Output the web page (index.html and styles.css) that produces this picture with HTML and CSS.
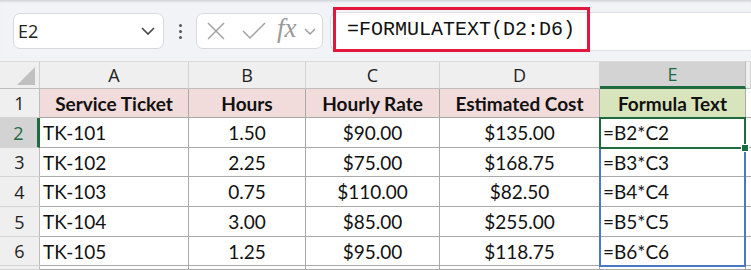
FILE: index.html
```html
<!DOCTYPE html>
<html lang="en">
<head>
  <meta charset="UTF-8" />
  <title>Formula Text</title>
  <link rel="stylesheet" href="styles.css">
</head>
<body>
  <div class="toolbar">
    <div class="namebox">
      <span>E2</span>
      <svg class="chev" width="14" height="8" viewBox="0 0 14 8"><path d="M1 1 L7 7 L13 1" fill="none" stroke="#444" stroke-width="1.6"/></svg>
    </div>
    <div class="grip"><span></span><span></span><span></span></div>
    <div class="fnbox">
      <svg class="ico x" width="20" height="20" viewBox="0 0 20 20"><path d="M2 2 L18 18 M18 2 L2 18" stroke="#a3a3a3" stroke-width="1.5"/></svg>
      <svg class="ico" width="26" height="20" viewBox="0 0 26 20"><path d="M2 10 L9 17 L24 2" fill="none" stroke="#a3a3a3" stroke-width="1.5"/></svg>
      <span class="fx">fx</span>
      <svg class="chev small" width="12" height="7" viewBox="0 0 12 7"><path d="M1 1 L6 6 L11 1" fill="none" stroke="#9a9a9a" stroke-width="1.4"/></svg>
    </div>
    <div class="formula">
      <div class="formula-text">=FORMULATEXT(D2:D6)</div>
    </div>
  </div>

  <div class="sheet">
    <div class="corner"><span class="tri"></span></div>
    <div class="hd">A</div>
    <div class="hd">B</div>
    <div class="hd">C</div>
    <div class="hd">D</div>
    <div class="hd active">E</div>
    <div class="hd"></div>

    <div class="rh">1</div>
    <div class="c th">Service Ticket</div>
    <div class="c th">Hours</div>
    <div class="c th">Hourly Rate</div>
    <div class="c th">Estimated Cost</div>
    <div class="c th green">Formula Text</div>
    <div class="c blank"></div>

    <div class="rh active">2</div>
    <div class="c">TK-101</div>
    <div class="c mid">1.50</div>
    <div class="c mid">$90.00</div>
    <div class="c mid">$135.00</div>
    <div class="c">=B2*C2</div>
    <div class="c blank"></div>

    <div class="rh">3</div>
    <div class="c">TK-102</div>
    <div class="c mid">2.25</div>
    <div class="c mid">$75.00</div>
    <div class="c mid">$168.75</div>
    <div class="c">=B3*C3</div>
    <div class="c blank"></div>

    <div class="rh">4</div>
    <div class="c">TK-103</div>
    <div class="c mid">0.75</div>
    <div class="c mid">$110.00</div>
    <div class="c mid">$82.50</div>
    <div class="c">=B4*C4</div>
    <div class="c blank"></div>

    <div class="rh">5</div>
    <div class="c">TK-104</div>
    <div class="c mid">3.00</div>
    <div class="c mid">$85.00</div>
    <div class="c mid">$255.00</div>
    <div class="c">=B5*C5</div>
    <div class="c blank"></div>

    <div class="rh">6</div>
    <div class="c">TK-105</div>
    <div class="c mid">1.25</div>
    <div class="c mid">$95.00</div>
    <div class="c mid">$118.75</div>
    <div class="c">=B6*C6</div>
    <div class="c blank"></div>

    <div class="rh"></div>
    <div class="c"></div>
    <div class="c"></div>
    <div class="c"></div>
    <div class="c"></div>
    <div class="c"></div>
    <div class="c blank"></div>

    <div class="range"></div>
    <div class="selected"><span class="handle"></span></div>
  </div>
</body>
</html>
```

FILE: styles.css
```css
body {
  margin: 0;
  width: 751px;
  height: 270px;
  overflow: hidden;
  background: #f1f3f6;
  font-family: 'Lato', 'Open Sans', sans-serif;
  color: #111;
}

.toolbar {
  height: 61px;
  display: flex;
  align-items: flex-start;
  padding: 13px 0 0 13px;
  box-sizing: border-box;
  box-shadow: inset 0 3px 3px -2px rgba(0,0,0,0.18);
}

.namebox {
  width: 151px;
  height: 36px;
  box-sizing: border-box;
  background: #fff;
  border: 1px solid #d6d9de;
  border-radius: 7px;
  display: flex;
  align-items: center;
  justify-content: space-between;
  padding: 0 8px 0 4px;
  font-family: 'Open Sans', sans-serif;
  font-size: 18px;
  color: #222;
}

.grip {
  width: 32px;
  height: 36px;
  display: flex;
  flex-direction: column;
  align-items: center;
  justify-content: center;
  gap: 3px;
}

.grip span {
  width: 3px;
  height: 3px;
  border-radius: 50%;
  background: #555;
}

.fnbox {
  width: 127px;
  height: 36px;
  box-sizing: border-box;
  background: #fff;
  border: 1px solid #d6d9de;
  border-radius: 7px;
  display: flex;
  align-items: center;
  padding: 0 0 0 9px;
}

.fnbox .ico { margin-right: 10px; }
.fnbox .ico.x { margin-right: 15px; }

.fx {
  font-family: 'Liberation Serif', serif;
  font-style: italic;
  font-size: 27px;
  color: #9a9a9a;
  margin: -5px 7px 0 0;
}

.formula {
  position: relative;
  flex: 1;
  height: 37px;
  margin: -1px 0 0 7px;
  background: #fff;
  border: 1px solid #dde0e4;
  border-right: none;
  border-radius: 7px 0 0 7px;
}

.formula-text {
  position: absolute;
  left: 2px;
  top: -6px;
  width: 257px;
  height: 45px;
  box-sizing: border-box;
  border: 3px solid #e3173e;
  padding: 0 0 0 11px;
  line-height: 39px;
  font-family: 'Liberation Mono', monospace;
  font-size: 20px;
  color: #111;
}

.sheet {
  position: relative;
  display: grid;
  grid-template-columns: 40px 149px 117px 134px 160px 146px 5px;
  grid-template-rows: 28px 29px 30px 29px 30px 30px 29px 4px;
  background: #fff;
}

.corner {
  position: relative;
  background: #efefef;
  border-right: 1px solid #cfcfcf;
  border-bottom: 1px solid #bdbdbd;
  border-top: 1px solid #dcdcdc;
}

.tri {
  position: absolute;
  right: 4px;
  bottom: 3px;
  width: 0;
  height: 0;
  border-left: 18px solid transparent;
  border-bottom: 18px solid #c0c0c0;
}

.hd {
  background: #efefef;
  border-top: 1px solid #dcdcdc;
  border-right: 1px solid #d4d4d4;
  border-bottom: 1px solid #bdbdbd;
  font-family: 'Open Sans', sans-serif;
  font-size: 18px;
  display: flex;
  align-items: center;
  justify-content: center;
  color: #222;
}

.hd.active {
  background: #d3d3d3;
  color: #1e6b40;
  border-bottom: 3px solid #1e6b40;
  border-right-color: #bcbcbc;
}

.rh {
  background: #efefef;
  border-right: 1px solid #bdbdbd;
  border-bottom: 1px solid #d4d4d4;
  font-family: 'Open Sans', sans-serif;
  font-size: 18px;
  display: flex;
  align-items: center;
  justify-content: center;
  color: #222;
}

.rh.active {
  background: #d3d3d3;
  color: #1e6b40;
  border-right: 3px solid #1e6b40;
}

.c {
  border-right: 1px solid #a9a9a9;
  border-bottom: 1px solid #a9a9a9;
  font-size: 19px;
  display: flex;
  align-items: center;
  padding-left: 3px;
  white-space: nowrap;
  overflow: hidden;
}

.c.mid {
  justify-content: center;
  padding-left: 0;
}

.c.th {
  background: #f2dcdb;
  font-weight: bold;
  justify-content: center;
  padding-left: 0;
}

.c.th.green { background: #d8e4bc; }

.c.blank { border-right: none; }

.range {
  position: absolute;
  grid-column: 6 / 7;
  grid-row: 3 / 8;
  top: -1px;
  bottom: -1px;
  left: -1px;
  right: 0;
  border: 2px solid #4a78c2;
}

.selected {
  position: absolute;
  grid-column: 6 / 7;
  grid-row: 3 / 4;
  top: -1px;
  bottom: -1px;
  left: -1px;
  right: 0;
  border: 2px solid #1e6b40;
}

.handle {
  position: absolute;
  right: -5px;
  bottom: -5px;
  width: 6px;
  height: 6px;
  background: #1e6b40;
  border: 1px solid #fff;
}
```
